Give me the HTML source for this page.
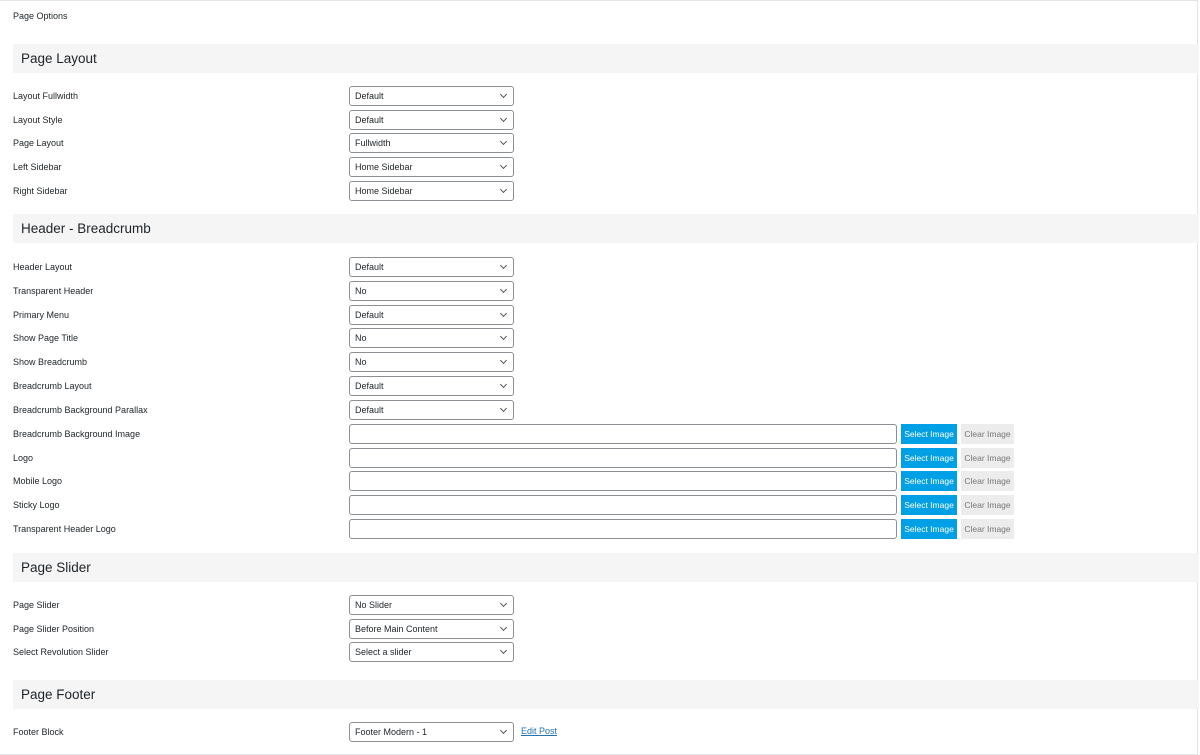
<!DOCTYPE html><html><head><style>
body{margin:0;width:1200px;height:755px;background:#fff;font-family:"Liberation Sans",sans-serif;color:#1d2327;position:relative;overflow:hidden}
.box{position:absolute;left:0;top:0;width:1197px;height:753px;border:1px solid #e2e4e7;border-left:none}
.t{position:absolute;left:13px;font-size:9px}
.h{position:absolute;left:13px;width:1186px;height:29px;background:#f5f5f6;font-size:13.5px;line-height:29px;text-indent:8px}
.s{position:absolute;left:349px;width:163px;height:18px;border:1px solid #8c8f94;border-radius:3px;font-size:9px;line-height:18px;text-indent:5px}
.s:after{content:"";position:absolute;right:7px;top:5px;width:4px;height:4px;border-right:1px solid #50575e;border-bottom:1px solid #50575e;transform:rotate(45deg)}
.i{position:absolute;left:349px;width:546px;height:18px;border:1px solid #8c8f94;border-radius:3px}
.b1{position:absolute;left:901px;width:56px;height:20px;background:#00a0e6;color:#fff;font-size:8.5px;line-height:20px;text-align:center}
.b2{position:absolute;left:961px;width:53px;height:20px;background:#ececec;color:#777;font-size:8.5px;line-height:20px;text-align:center}
</style></head><body><div class="box"></div>
<div class="t" style="top:11px">Page Options</div>
<div class="h" style="top:44px">Page Layout</div>
<div class="t" style="top:91px">Layout Fullwidth</div><div class="s" style="top:86px">Default</div>
<div class="t" style="top:115px">Layout Style</div><div class="s" style="top:110px">Default</div>
<div class="t" style="top:138px">Page Layout</div><div class="s" style="top:133px">Fullwidth</div>
<div class="t" style="top:162px">Left Sidebar</div><div class="s" style="top:157px">Home Sidebar</div>
<div class="t" style="top:186px">Right Sidebar</div><div class="s" style="top:181px">Home Sidebar</div>
<div class="h" style="top:214px">Header - Breadcrumb</div>
<div class="t" style="top:262px">Header Layout</div><div class="s" style="top:257px">Default</div>
<div class="t" style="top:286px">Transparent Header</div><div class="s" style="top:281px">No</div>
<div class="t" style="top:310px">Primary Menu</div><div class="s" style="top:305px">Default</div>
<div class="t" style="top:333px">Show Page Title</div><div class="s" style="top:328px">No</div>
<div class="t" style="top:357px">Show Breadcrumb</div><div class="s" style="top:352px">No</div>
<div class="t" style="top:381px">Breadcrumb Layout</div><div class="s" style="top:376px">Default</div>
<div class="t" style="top:405px">Breadcrumb Background Parallax</div><div class="s" style="top:400px">Default</div>
<div class="t" style="top:429px">Breadcrumb Background Image</div><div class="i" style="top:424px"></div><div class="b1" style="top:424px">Select Image</div><div class="b2" style="top:424px">Clear Image</div>
<div class="t" style="top:453px">Logo</div><div class="i" style="top:448px"></div><div class="b1" style="top:448px">Select Image</div><div class="b2" style="top:448px">Clear Image</div>
<div class="t" style="top:476px">Mobile Logo</div><div class="i" style="top:471px"></div><div class="b1" style="top:471px">Select Image</div><div class="b2" style="top:471px">Clear Image</div>
<div class="t" style="top:500px">Sticky Logo</div><div class="i" style="top:495px"></div><div class="b1" style="top:495px">Select Image</div><div class="b2" style="top:495px">Clear Image</div>
<div class="t" style="top:524px">Transparent Header Logo</div><div class="i" style="top:519px"></div><div class="b1" style="top:519px">Select Image</div><div class="b2" style="top:519px">Clear Image</div>
<div class="h" style="top:553px">Page Slider</div>
<div class="t" style="top:600px">Page Slider</div><div class="s" style="top:595px">No Slider</div>
<div class="t" style="top:624px">Page Slider Position</div><div class="s" style="top:619px">Before Main Content</div>
<div class="t" style="top:647px">Select Revolution Slider</div><div class="s" style="top:642px">Select a slider</div>
<div class="h" style="top:680px">Page Footer</div>
<div class="t" style="top:727px">Footer Block</div><div class="s" style="top:722px">Footer Modern - 1</div>
<div class="t" style="top:726px;left:521px;color:#2271b1;text-decoration:underline">Edit Post</div>
</body></html>
